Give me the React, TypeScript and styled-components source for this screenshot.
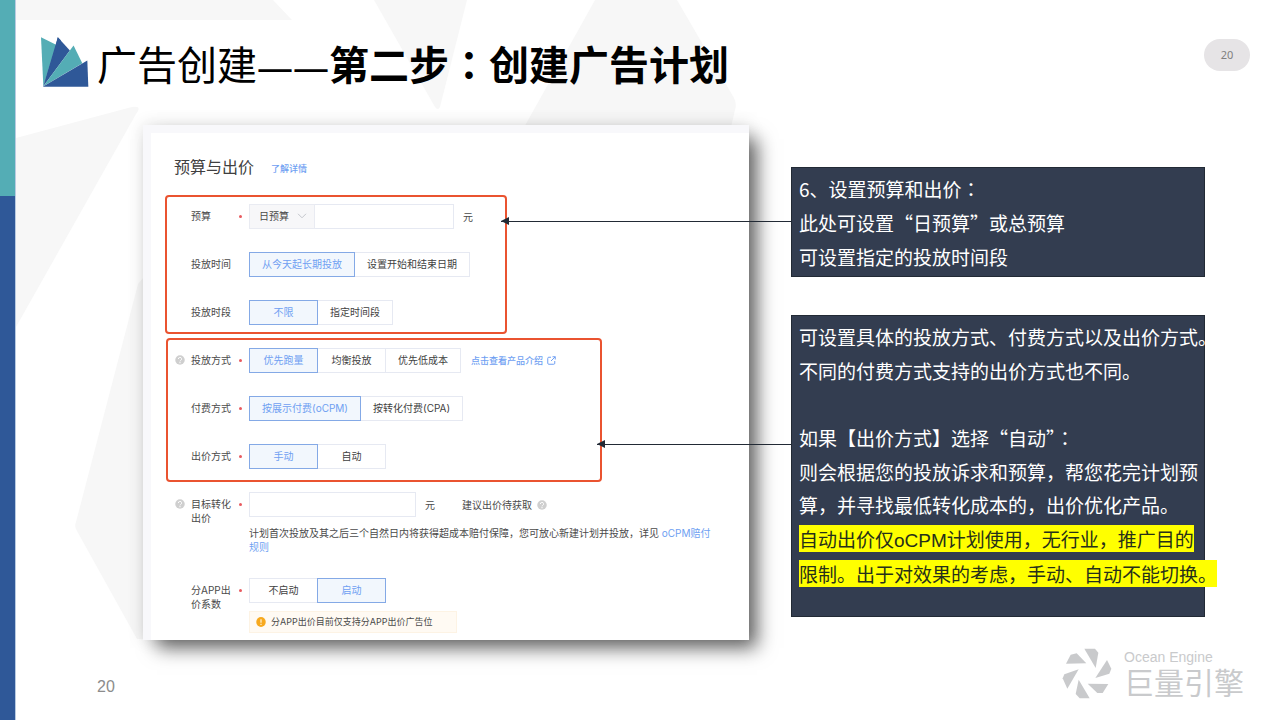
import React from 'react';
import styled, { createGlobalStyle, css } from 'styled-components';

const GlobalStyle = createGlobalStyle`
  *, *::before, *::after { box-sizing: border-box; }
  body {
    margin: 0;
    background: #fff;
    font-family: "Noto Sans CJK SC", "Liberation Sans", sans-serif;
  }
  h1, h2, p { margin: 0; font-weight: 400; }
  button, input, select { font: inherit; color: inherit; }
`;

const LINK = '#6f9ff2';

const Slide = styled.div`
  position: relative;
  display: flex;
  min-height: 100vh;
  overflow: hidden;
`;

const Backdrop = styled.svg`
  position: absolute;
  inset: 0;
  width: 100%;
  height: 100%;
`;

const Rail = styled.div`
  position: relative;
  display: flex;
  flex-direction: column;
  flex: 0 0 15px;
  box-shadow: 1px 0 0 #b9cbe2;
`;

const RailTop = styled.div`
  height: 196px;
  background: #54adb5;
`;

const RailRest = styled.div`
  flex: 1;
  background: #2f5898;
`;

const Page = styled.div`
  position: relative;
  flex: 1;
  min-width: 0;
`;

const Header = styled.header`
  display: flex;
  align-items: flex-end;
  padding: 37px 30px 38px 26px;
`;

const Title = styled.h1`
  flex: 1;
  margin-left: 8px;
  font-size: 40px;
  line-height: 40px;
  color: #000;
  white-space: nowrap;
`;

const Dash = styled.span`
  font-family: "Noto Sans", sans-serif;
  font-size: 36px;
`;

const CenteredMark = styled.span`
  font-family: "Noto Sans CJK TC", sans-serif;
`;

const PagePill = styled.span`
  align-self: flex-start;
  margin-top: 2px;
  width: 46px;
  border-radius: 16px;
  background: #e6e4e6;
  color: #808080;
  font-family: "Noto Sans", sans-serif;
  font-size: 11px;
  line-height: 32px;
  text-align: center;
`;

const Main = styled.main`
  display: grid;
  grid-template-columns: minmax(0, 606fr) minmax(0, 414fr);
  column-gap: 42px;
  align-items: start;
  padding: 0 75px 0 128px;
`;

const Card = styled.section`
  padding: 22px 0 7px;
  border: solid #f8f8fb;
  border-width: 8px 0 0 8px;
  background: #fff;
  box-shadow: 11px 11px 18px -3px rgba(0, 0, 0, 0.6), 0 0 16px rgba(0, 0, 0, 0.12);
  font-family: Inter, "Noto Sans CJK SC", sans-serif;
  font-size: 10px;
  line-height: 14px;
  color: #4a4a4a;
`;

const CardHeader = styled.div`
  display: flex;
  align-items: center;
  gap: 17px;
  margin-bottom: 16px;
  padding-left: 23px;
`;

const CardTitle = styled.h2`
  font-size: 16px;
  line-height: 24px;
  color: #404040;
`;

const TextLink = styled.a`
  color: ${LINK};
  text-decoration: none;
`;

const SmallLink = styled(TextLink)`
  display: inline-flex;
  align-items: center;
  gap: 4px;
  font-size: 9px;
  font-weight: 500;
`;

const HeaderLink = styled(SmallLink)`
  padding-top: 4px;
`;

const Rows = styled.div`
  display: grid;
  row-gap: 23px;
`;

const FirstGroup = styled(Rows)`
  width: 342px;
  margin: 0 0 4px 14px;
  padding: 7px 0 7px 8px;
  border: 2px solid #ea5330;
  border-radius: 4px;
`;

const SecondGroup = styled(Rows)`
  width: 436px;
  margin: 0 0 10px 15px;
  padding: 8px 0 11px 7px;
  border: 2px solid #ea5330;
  border-radius: 4px;
`;

const PlainGroup = styled(Rows)`
  padding-left: 24px;
`;

const Row = styled.div`
  display: grid;
  grid-template-columns: 16px 44px 14px minmax(0, 1fr);
  align-items: start;
`;

const HelpSlot = styled.span`
  display: flex;
  align-items: center;
  height: 24px;
`;

const labelStyle = css`
  padding-top: 5px;
  white-space: nowrap;
`;

const RowLabel = styled.label`
  ${labelStyle}
`;

const RowCaption = styled.span`
  ${labelStyle}
`;

const Required = styled.span`
  width: 3px;
  height: 3px;
  margin: 11px 0 0 4px;
  border-radius: 50%;
  background: #e85a5f;
`;

const Controls = styled.div`
  display: flex;
  align-items: center;
`;

const Option = styled.button<{ $selected: boolean }>`
  position: relative;
  z-index: ${(p) => (p.$selected ? 1 : 0)};
  min-width: 69px;
  height: 25px;
  padding: 0 12px 2px;
  border: 1px solid ${(p) => (p.$selected ? '#84a9e6' : '#e6e9f2')};
  background: ${(p) => (p.$selected ? '#f2f7fd' : '#fff')};
  color: ${(p) => (p.$selected ? LINK : '#3f3f3f')};
  white-space: nowrap;

  & + & {
    margin-left: -1px;
  }
`;

const SelectWrap = styled.span`
  position: relative;
  width: 66px;

  svg {
    position: absolute;
    right: 8px;
    top: 9px;
    pointer-events: none;
  }
`;

const BudgetSelect = styled.select`
  display: block;
  width: 100%;
  height: 25px;
  padding: 0 9px 2px;
  appearance: none;
  border: 1px solid #e9ebf2;
  border-radius: 0;
  background: #f7f7f9;
`;

const TextBox = styled.input<{ $width: number }>`
  width: ${(p) => p.$width}px;
  height: 25px;
  padding: 0 8px;
  border: 1px solid #e6e9f2;
  border-radius: 0;
  background: #fff;
`;

const BudgetBox = styled(TextBox)`
  border-left: 0;
`;

const Unit = styled.span`
  margin-left: 9px;
`;

const Suggestion = styled.span`
  display: inline-flex;
  align-items: center;
  gap: 5px;
  margin-left: 27px;
`;

const LinkSlot = styled.span`
  display: inline-flex;
  margin-left: 10px;
`;

const Hint = styled.p`
  max-width: 466px;
  margin: 9px 0 1px;
`;

const Warning = styled.p`
  display: flex;
  align-items: center;
  gap: 5px;
  width: 208px;
  height: 22px;
  margin-top: 8px;
  padding-left: 6px;
  border: 1px solid #fdf3e4;
  background: #fffaf3;
  font-size: 9px;
  white-space: nowrap;
`;

const Notes = styled.aside`
  display: grid;
  grid-template-columns: minmax(0, 1fr);
  row-gap: 38px;
  padding-top: 42px;
`;

const Note = styled.section<{ $bottom: number }>`
  position: relative;
  display: grid;
  grid-template-columns: minmax(0, 1fr);
  row-gap: 1px;
  padding: 4px 7px ${(p) => p.$bottom}px;
  border: 1px solid #222a35;
  background: #333d50;
  color: #fff;
  font-size: 19px;
  line-height: 33px;
  font-weight: 300;
  white-space: nowrap;
`;

const BlankLine = styled.div`
  height: 32px;
`;

const Marked = styled.mark`
  background: #ff0;
  color: #26301a;
`;

const Latin = styled.span`
  font-family: "Liberation Sans", sans-serif;
`;

const Arrow = styled.span<{ $length: number; $top: number }>`
  position: absolute;
  right: 100%;
  top: ${(p) => p.$top}px;
  width: ${(p) => p.$length}px;
  height: 1px;
  background: #222a35;

  &::before {
    content: "";
    position: absolute;
    left: 0;
    top: -4px;
    border: solid transparent;
    border-width: 4px 8px 4px 0;
    border-right-color: #222a35;
  }
`;

const Footer = styled.footer`
  display: flex;
  align-items: center;
  justify-content: space-between;
  padding: 8px 36px 20px 82px;
`;

const PageNumber = styled.span`
  padding-top: 26px;
  color: #8c8c8c;
  font-family: "Liberation Sans", sans-serif;
  font-size: 16px;
  line-height: 24px;
`;

const Brand = styled.div`
  display: flex;
  align-items: flex-start;
  gap: 12px;
  color: #c9cacc;
`;

const BrandLatin = styled.div`
  font-family: "Liberation Sans", sans-serif;
  font-size: 14px;
  line-height: 18px;
`;

const BrandName = styled.div`
  font-size: 30px;
  line-height: 30px;
`;

const HelpIcon = () => (
  <svg width="10" height="10" viewBox="0 0 20 20" aria-hidden="true">
    <circle cx="10" cy="10" r="9.5" fill="#cfcfcf" />
    <path d="M6.8 8a3.2 3.2 0 1 1 4.6 2.8c-1 .5-1.4 1-1.4 2" fill="none" stroke="#fff" strokeWidth="2" />
    <circle cx="10" cy="15.4" r="1.3" fill="#fff" />
  </svg>
);

const ChevronIcon = () => (
  <svg width="10" height="6" viewBox="0 0 10 6" aria-hidden="true">
    <path d="M1 .8 5 4.8 9 .8" fill="none" stroke="#c3c6cc" strokeWidth="1" />
  </svg>
);

const ExternalIcon = () => (
  <svg width="9" height="9" viewBox="0 0 18 18" aria-hidden="true">
    <path
      d="M8 2.5H3.5a2 2 0 0 0-2 2v10a2 2 0 0 0 2 2h10a2 2 0 0 0 2-2V10M11 1.5h5.5V7M16.5 1.5 8 10"
      fill="none"
      stroke={LINK}
      strokeWidth="2"
    />
  </svg>
);

const WarnIcon = () => (
  <svg width="10" height="11" viewBox="0 0 20 22" aria-hidden="true">
    <ellipse cx="10" cy="10" rx="9.5" ry="10" fill="#f7a91e" />
    <path d="M10 4.5v7M10 13.5v2.5" stroke="#fff" strokeWidth="2" />
  </svg>
);

const FanLogo = () => (
  <svg width="48" height="50" viewBox="123 110 143 149" aria-hidden="true">
    <path d="M123 111 168 133 130 257Z" fill="#54adb5" />
    <path d="M173 111 209 150 130 257Z" fill="#2f5898" />
    <path d="M168 133 173 111 182 120 130 257Z" fill="#2f5898" />
    <path d="M220 135 246 188 130 257Z" fill="#54adb5" />
    <path d="M261 180 264 258 128 258Z" fill="#2f5898" />
  </svg>
);

const ApertureLogo = () => (
  <svg width="50" height="51" viewBox="63 52 150 153" fill="#c9cacc" aria-hidden="true">
    <path d="M130 54H162L172 66 164 112Z" />
    <path d="M198 88 211 114 205 129 163 142Z" />
    <path d="M140 159 202 160 185 187H169Z" />
    <path d="M113 147 146 203H116L104 190Z" />
    <path d="M79 174 65 143 70 131 113 116Z" />
    <path d="M75 99 89 72 107 68 136 98Z" />
  </svg>
);

type FieldProps = {
  label: React.ReactNode;
  htmlFor?: string;
  help?: boolean;
  required?: boolean;
  children: React.ReactNode;
};

const Field = ({ label, htmlFor, help, required, children }: FieldProps) => (
  <Row>
    <HelpSlot>{help && <HelpIcon />}</HelpSlot>
    {htmlFor ? <RowLabel htmlFor={htmlFor}>{label}</RowLabel> : <RowCaption>{label}</RowCaption>}
    {required ? <Required aria-hidden="true" /> : <span />}
    <div>{children}</div>
  </Row>
);

type OptionsProps = { name: string; items: string[]; initial?: number; children?: React.ReactNode };

const Options = ({ name, items, initial = 0, children }: OptionsProps) => {
  const [selected, setSelected] = React.useState(initial);
  return (
    <Controls role="group" aria-label={name}>
      {items.map((item, i) => (
        <Option
          key={item}
          type="button"
          $selected={i === selected}
          aria-pressed={i === selected}
          onClick={() => setSelected(i)}
        >
          {item}
        </Option>
      ))}
      {children}
    </Controls>
  );
};

export default function App() {
  return (
    <Slide>
      <GlobalStyle />
      <Backdrop viewBox="0 0 1280 720" preserveAspectRatio="none" fill="#f7f7f7" aria-hidden="true">
        <path d="M16 0H273L292 20H16Z" />
        <path d="M374 0H467L440 107Q438 111 435 107Z" />
        <path d="M595 0H677L734 98Q737 104 735 110L728 140H517Z" />
        <path d="M16 138 128 108Q144 104 136 114L16 327Z" />
        <path d="M150 270 138 284 76 522Q74 527 77 531L137 639H150Z" />
      </Backdrop>
      <Rail>
        <RailTop />
        <RailRest />
      </Rail>
      <Page>
        <Header>
          <FanLogo />
          <Title>
            广告创建<Dash>——</Dash>
            <b>
              第二步<CenteredMark>：</CenteredMark>创建广告计划
            </b>
          </Title>
          <PagePill>20</PagePill>
        </Header>
        <Main>
          <Card>
            <CardHeader>
              <CardTitle>预算与出价</CardTitle>
              <HeaderLink href="#details">了解详情</HeaderLink>
            </CardHeader>
            <FirstGroup>
              <Field label="预算" htmlFor="budget" required>
                <Controls>
                  <SelectWrap>
                    <BudgetSelect aria-label="预算类型" defaultValue="日预算">
                      <option>日预算</option>
                      <option>总预算</option>
                    </BudgetSelect>
                    <ChevronIcon />
                  </SelectWrap>
                  <BudgetBox id="budget" type="text" $width={139} />
                  <Unit>元</Unit>
                </Controls>
              </Field>
              <Field label="投放时间">
                <Options name="投放时间" items={['从今天起长期投放', '设置开始和结束日期']} />
              </Field>
              <Field label="投放时段">
                <Options name="投放时段" items={['不限', '指定时间段']} />
              </Field>
            </FirstGroup>
            <SecondGroup>
              <Field label="投放方式" help required>
                <Options name="投放方式" items={['优先跑量', '均衡投放', '优先低成本']}>
                  <LinkSlot>
                    <SmallLink href="#intro">
                      点击查看产品介绍
                      <ExternalIcon />
                    </SmallLink>
                  </LinkSlot>
                </Options>
              </Field>
              <Field label="付费方式" required>
                <Options name="付费方式" items={['按展示付费(oCPM)', '按转化付费(CPA)']} />
              </Field>
              <Field label="出价方式" required>
                <Options name="出价方式" items={['手动', '自动']} />
              </Field>
            </SecondGroup>
            <PlainGroup>
              <Field
                label={
                  <>
                    目标转化
                    <br />
                    出价
                  </>
                }
                htmlFor="bid"
                help
                required
              >
                <Controls>
                  <TextBox id="bid" type="text" $width={167} />
                  <Unit>元</Unit>
                  <Suggestion>
                    建议出价待获取
                    <HelpIcon />
                  </Suggestion>
                </Controls>
                <Hint>
                  计划首次投放及其之后三个自然日内将获得超成本赔付保障，您可放心新建计划并投放，详见{' '}
                  <TextLink href="#ocpm">oCPM赔付规则</TextLink>
                </Hint>
              </Field>
              <Field
                label={
                  <>
                    分APP出
                    <br />
                    价系数
                  </>
                }
                required
              >
                <Options name="分APP出价系数" items={['不启动', '启动']} initial={1} />
                <Warning>
                  <WarnIcon />
                  分APP出价目前仅支持分APP出价广告位
                </Warning>
              </Field>
            </PlainGroup>
          </Card>
          <Notes>
            <Note $bottom={3}>
              <Arrow $length={291} $top={53} />
              <p>
                6、设置预算和出价<CenteredMark>：</CenteredMark>
              </p>
              <p>此处可设置“日预算”或总预算</p>
              <p>可设置指定的投放时间段</p>
            </Note>
            <Note $bottom={26}>
              <Arrow $length={195} $top={128} />
              <p>可设置具体的投放方式、付费方式以及出价方式。</p>
              <p>不同的付费方式支持的出价方式也不同。</p>
              <BlankLine />
              <p>
                如果【出价方式】选择“自动”<CenteredMark>：</CenteredMark>
              </p>
              <p>
                则会根据您的投放诉求和预算，帮您花完计划预
                <br />
                算，并寻找最低转化成本的，出价优化产品。
              </p>
              <p>
                <Marked>
                  自动出价仅<Latin>oCPM</Latin>计划使用，无行业，推广目的
                  <br />
                  限制。出于对效果的考虑，手动、自动不能切换。
                </Marked>
              </p>
            </Note>
          </Notes>
        </Main>
        <Footer>
          <PageNumber>20</PageNumber>
          <Brand>
            <ApertureLogo />
            <div>
              <BrandLatin>Ocean Engine</BrandLatin>
              <BrandName>巨量引擎</BrandName>
            </div>
          </Brand>
        </Footer>
      </Page>
    </Slide>
  );
}
